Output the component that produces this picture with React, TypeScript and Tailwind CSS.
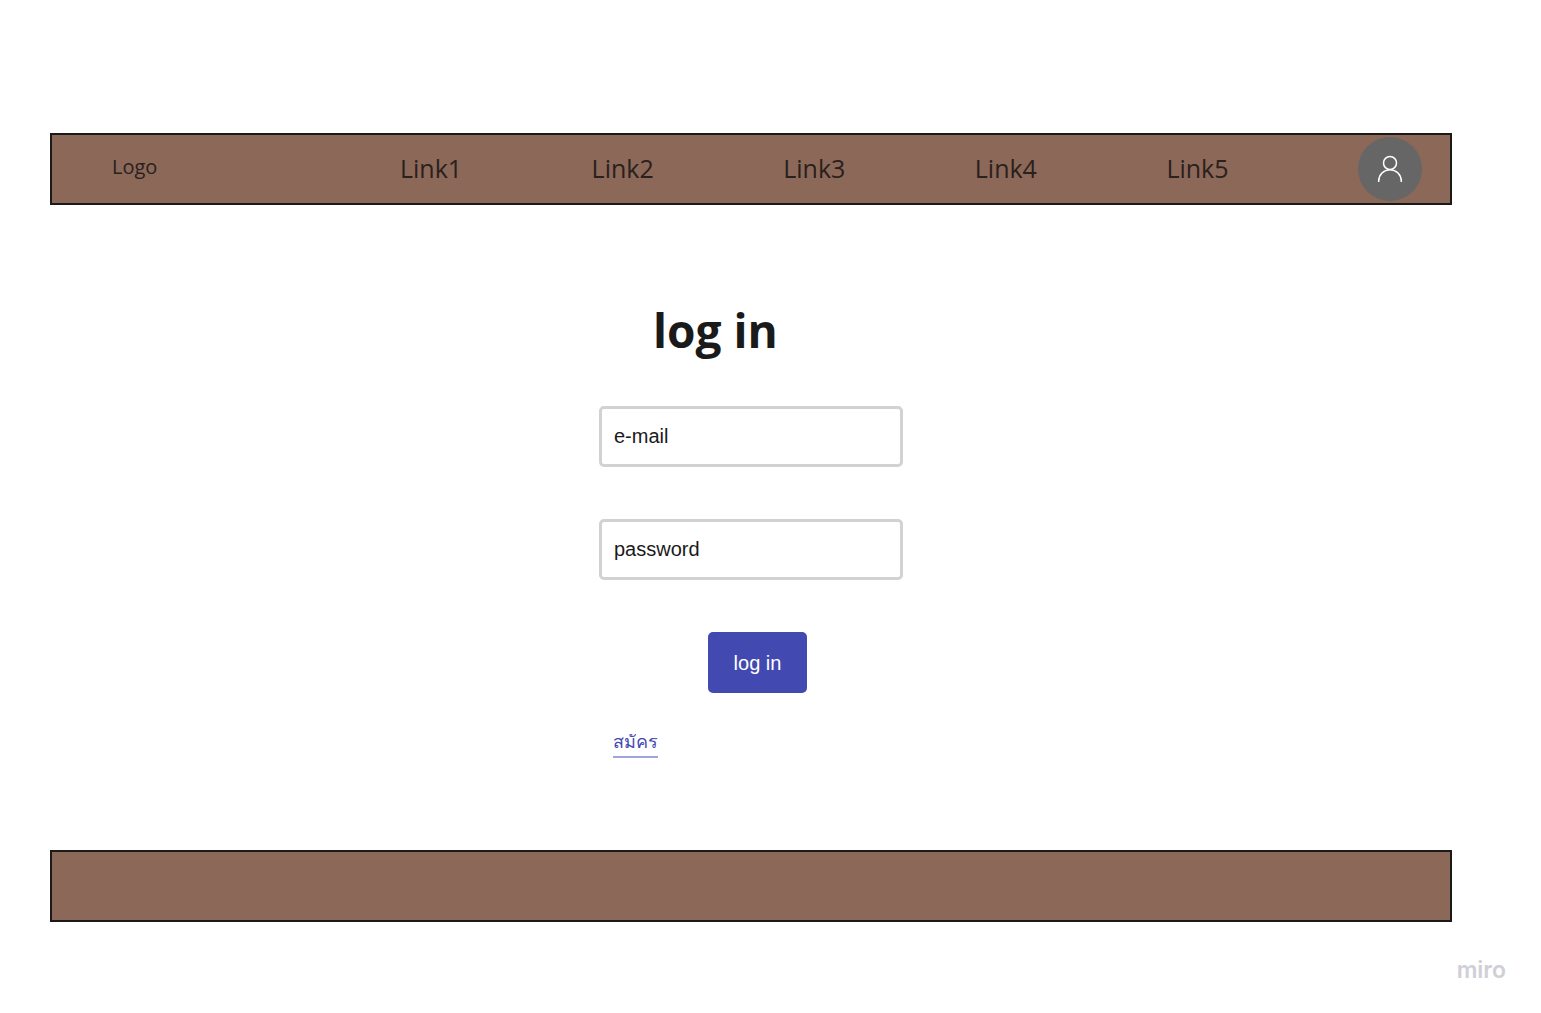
import React from "react";

const links = ["Link1", "Link2", "Link3", "Link4", "Link5"];

function UserIcon() {
  return (
    <svg viewBox="0 0 26 28" className="h-7 w-[26px]" fill="none" stroke="#ffffff" strokeWidth="1.5" aria-hidden="true">
      <circle cx="13" cy="8" r="6.5" />
      <path d="M1.7 27v-1a11.3 11.3 0 0 1 22.6 0v1" />
    </svg>
  );
}

function Field({ id, type, label }: { id: string; type: string; label: string }) {
  return (
    <input
      id={id}
      type={type}
      placeholder={label}
      aria-label={label}
      className="h-[61px] w-full rounded-[5px] border-[3px] border-[#d2d2d2] bg-white px-3 text-[20px] text-[#1a1a1a] outline-none placeholder:text-[#1a1a1a] placeholder:opacity-100"
    />
  );
}

export default function App() {
  return (
    <div className="flex min-h-screen flex-col bg-white pt-[133px] font-['Liberation_Sans',Arial,sans-serif] text-[#1a1a1a]">
      <div className="mr-[89px] ml-[50px] flex flex-col">
        <header className="flex h-[72px] items-center border-2 border-[#1a1a1a] bg-[#8c6859] pr-7 pl-[60px] font-['Open_Sans',sans-serif] text-[#2a201c]">
          <a href="#home" className="w-[288px] shrink-0 pb-1 text-[20px]">
            Logo
          </a>
          <nav className="flex grow items-center justify-between text-[25px]">
            {links.map((link) => (
              <a key={link} href={"#" + link.toLowerCase()}>
                {link}
              </a>
            ))}
            <button type="button" aria-label="Account" className="flex size-16 items-center justify-center rounded-full bg-[#666666]">
              <UserIcon />
            </button>
          </nav>
        </header>

        <main className="mx-auto mt-[92px] w-[304px]">
          <form onSubmit={(event) => event.preventDefault()} className="flex flex-col items-start">
            <h1 className="ml-[54px] font-['Open_Sans',sans-serif] text-[46px] leading-[66px] font-bold">log in</h1>
            <div className="mt-[43px] flex w-full flex-col gap-[52px]">
              <Field id="email" type="email" label="e-mail" />
              <Field id="password" type="password" label="password" />
            </div>
            <button type="submit" className="mt-[52px] ml-[109px] h-[61px] w-[99px] rounded-[5px] bg-[#4249b1] text-[20px] text-white">
              log in
            </button>
            <a href="#register" className="mt-[35px] ml-[14px] border-b-2 border-[#a1a4d8] text-[18px] leading-[28px] text-[#4249b1]">
              สมัคร
            </a>
          </form>
        </main>

        <footer className="mt-[92px] h-[72px] border-2 border-[#1a1a1a] bg-[#8c6859]" />
      </div>
      <div className="mt-8 mr-[35px] self-end font-['Inter',sans-serif] text-[23px] leading-[32px] font-semibold text-[#d0cfd8]">miro</div>
    </div>
  );
}
